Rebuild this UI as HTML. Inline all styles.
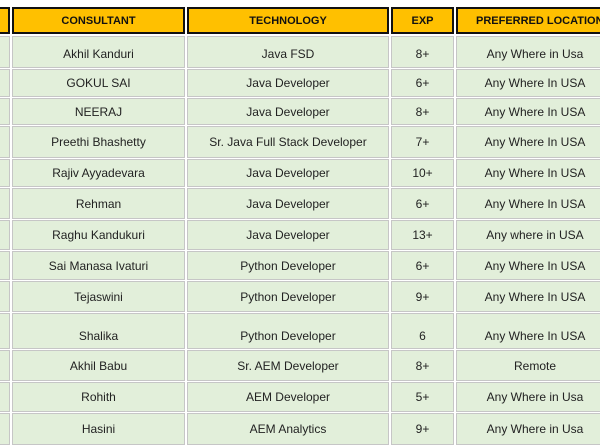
<!DOCTYPE html>
<html><head><style>
body{margin:0;width:600px;height:441px;overflow:hidden;background:#fff;font-family:"Liberation Sans",sans-serif;position:relative}
.c{position:absolute;box-sizing:border-box;background:#e2efda;border:1px solid #c6c6c6;display:flex;align-items:center;justify-content:center;font-size:12px;color:#222;white-space:nowrap}
.h{background:#ffc000;border:2px solid #111;font-weight:bold;color:#111;top:7px;height:27px;font-size:11px}
</style></head><body>
<div class="c h" style="left:-10px;width:20px"></div>
<div class="c h" style="left:12px;width:173px">CONSULTANT</div>
<div class="c h" style="left:187px;width:202px">TECHNOLOGY</div>
<div class="c h" style="left:391px;width:63px">EXP</div>
<div class="c h" style="left:456px;width:154px;justify-content:flex-start;padding-left:18px">PREFERRED LOCATION</div>
<script>
var rows=[[36,67,"Akhil Kanduri","Java FSD","8+","Any Where in Usa"],
[69,96,"GOKUL SAI","Java Developer","6+","Any Where In USA"],
[98,124,"NEERAJ","Java Developer","8+","Any Where In USA"],
[126,157,"Preethi Bhashetty","Sr. Java Full Stack Developer","7+","Any Where In USA"],
[159,186,"Rajiv Ayyadevara","Java Developer","10+","Any Where In USA"],
[188,218,"Rehman","Java Developer","6+","Any Where In USA"],
[220,249,"Raghu Kandukuri","Java Developer","13+","Any where in USA"],
[251,279,"Sai Manasa Ivaturi","Python Developer","6+","Any Where In USA"],
[281,311,"Tejaswini","Python Developer","9+","Any Where In USA"],
[313,348,"Shalika","Python Developer","6","Any Where In USA"],
[350,380,"Akhil Babu","Sr. AEM Developer","8+","Remote"],
[382,411,"Rohith","AEM Developer","5+","Any Where in Usa"],
[413,444,"Hasini","AEM Analytics","9+","Any Where in Usa"]];
var cols=[[-10,20],[12,173],[187,202],[391,63],[456,158]];
var h="";
rows.forEach(function(r){
 var t=r[0],hh=r[1]-r[0]+1,txt=["",r[2],r[3],r[4],r[5]];
 var pt=(r[0]==313)?"padding-top:10px;":(r[0]==36?"padding-top:4px;":"");
 cols.forEach(function(c,i){
  h+='<div class="c" style="'+pt+'left:'+c[0]+'px;width:'+c[1]+'px;top:'+t+'px;height:'+hh+'px">'+txt[i]+'</div>';
 });
});
document.write(h);
</script>
</body></html>
